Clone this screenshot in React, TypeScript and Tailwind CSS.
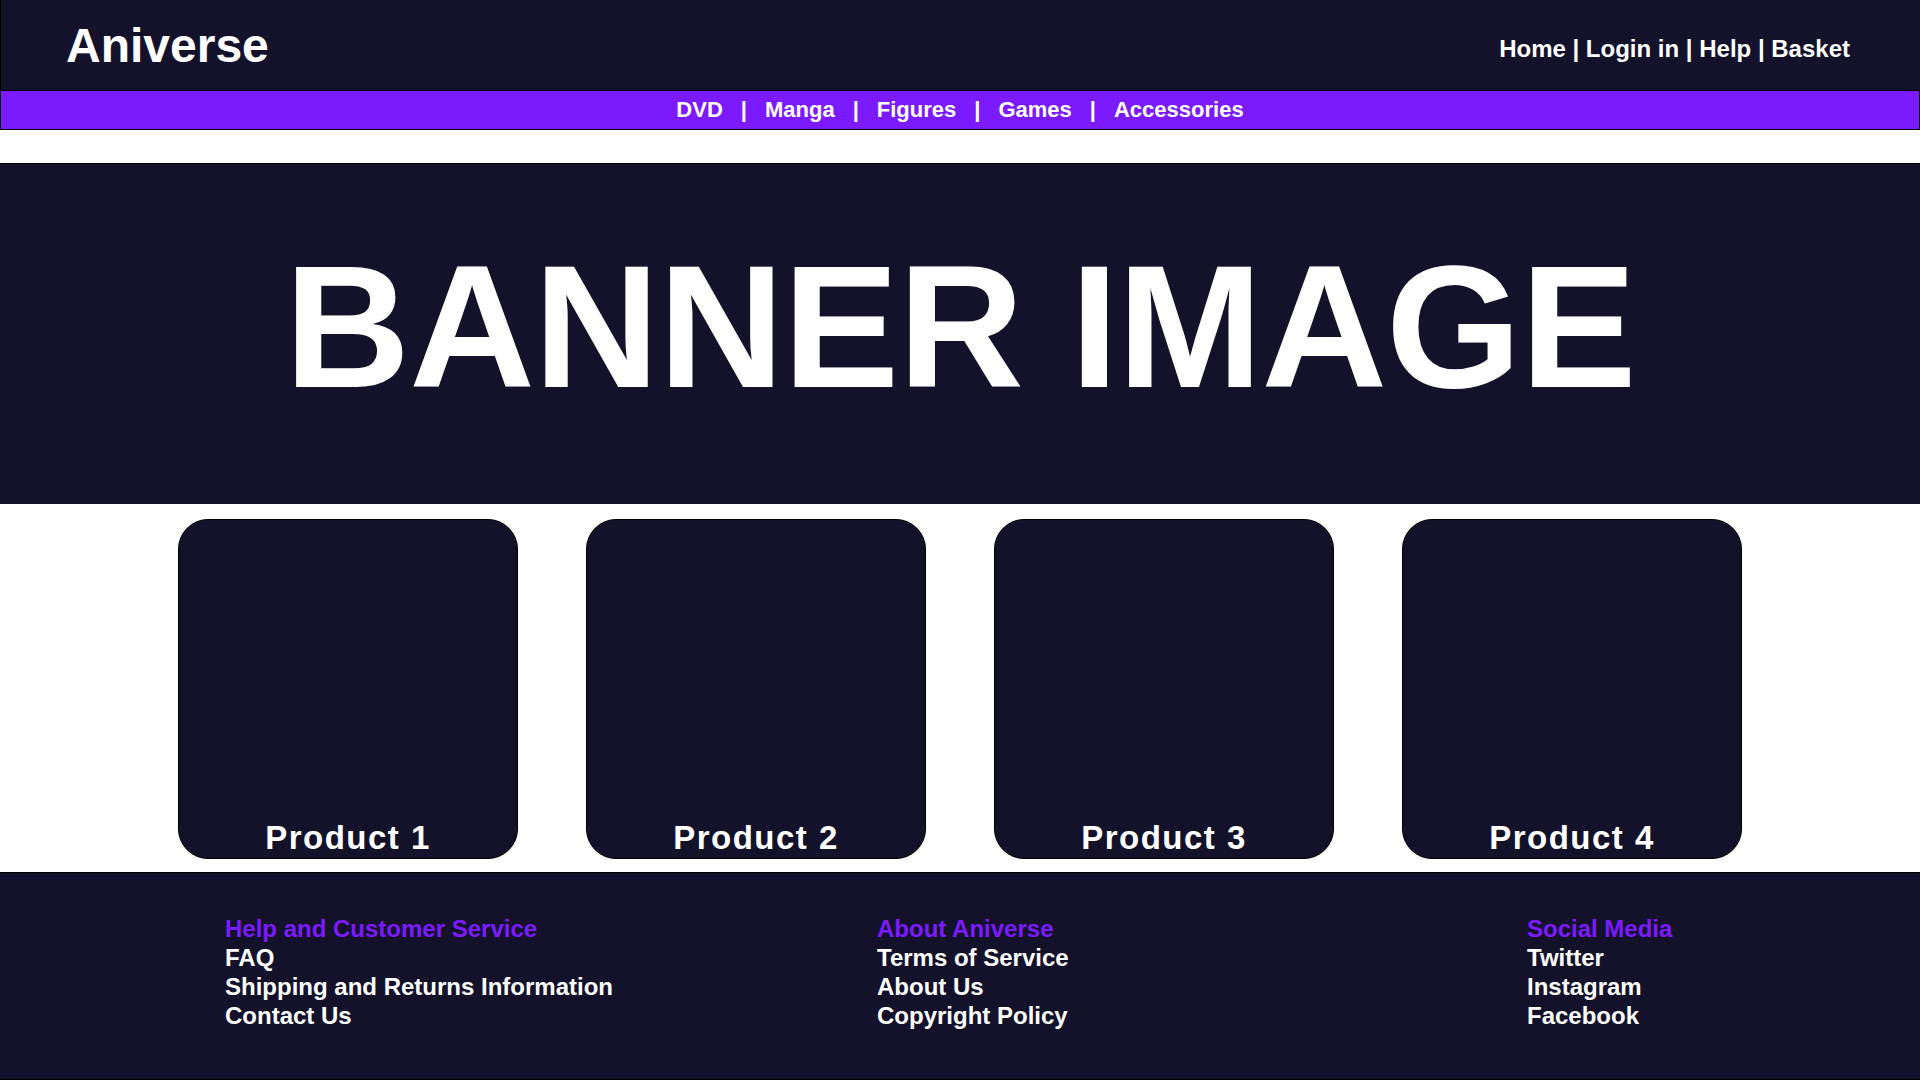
const products = ['Product 1', 'Product 2', 'Product 3', 'Product 4'];
const categories = ['DVD', 'Manga', 'Figures', 'Games', 'Accessories'];

const footerCols = [
  { title: 'Help and Customer Service', links: ['FAQ', 'Shipping and Returns Information', 'Contact Us'] },
  { title: 'About Aniverse', links: ['Terms of Service', 'About Us', 'Copyright Policy'] },
  { title: 'Social Media', links: ['Twitter', 'Instagram', 'Facebook'] },
];

export default function App() {
  return (
    <div className="w-[1920px] h-[1080px] bg-white flex flex-col font-['Liberation_Sans',Arial,sans-serif] overflow-hidden">
      {/* top header */}
      <header className="h-[90px] bg-[#13122a] border-l border-black flex items-center justify-between pl-[65px] pr-[70px]">
        <h1 className="text-white text-[48px] font-bold leading-none pt-[1px]">Aniverse</h1>
        <nav className="text-white text-[24px] font-bold leading-none pt-[8px]">
          Home | Login in | Help | Basket
        </nav>
      </header>

      {/* category bar */}
      <div className="h-[40px] bg-[#7b1bfd] border border-black flex items-center justify-center gap-[18px] text-white text-[22px] font-bold leading-none">
        {categories.map((c, i) => (
          <div key={c} className="flex items-center gap-[18px]">
            {i > 0 && <span>|</span>}
            <span>{c}</span>
          </div>
        ))}
      </div>

      <div className="h-[33px]" />

      {/* banner */}
      <section className="h-[341px] bg-[#13122a] border-t border-black flex items-center justify-center pb-[14px]">
        <span className="text-white text-[174px] font-bold leading-none tracking-[-1px]">BANNER IMAGE</span>
      </section>

      {/* products */}
      <section className="h-[368px] flex justify-center gap-[68px] pt-[15px]">
        {products.map(p => (
          <div
            key={p}
            className="w-[340px] h-[340px] bg-[#13122a] border border-black rounded-[30px] flex flex-col justify-end items-center pb-[4px]"
          >
            <span className="text-white text-[33px] font-bold leading-none tracking-[1.5px]">{p}</span>
          </div>
        ))}
      </section>

      {/* footer */}
      <footer className="flex-1 bg-[#13122a] border-t border-b border-black grid grid-cols-[652px_650px_auto] pl-[225px] pt-[41px] text-[24px] font-bold leading-[29px]">
        {footerCols.map(col => (
          <div key={col.title} className="flex flex-col">
            <span className="text-[#7b1bfd]">{col.title}</span>
            {col.links.map(l => (
              <span key={l} className="text-white">{l}</span>
            ))}
          </div>
        ))}
      </footer>
    </div>
  );
}
